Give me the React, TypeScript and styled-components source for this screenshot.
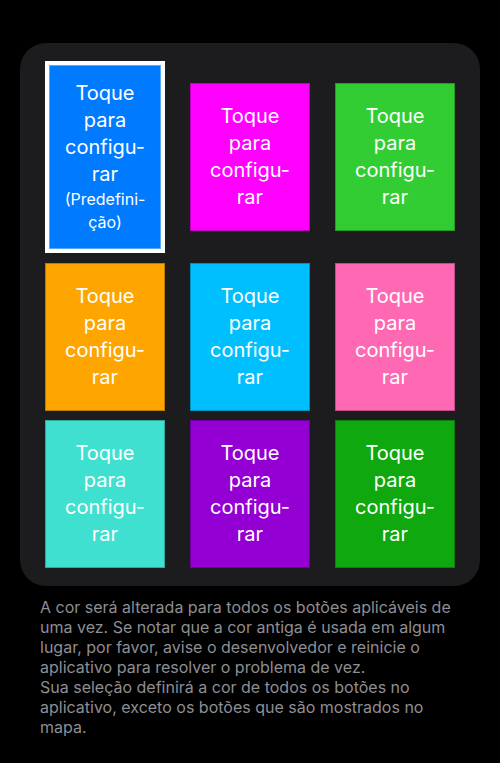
import React from "react";
import styled, { createGlobalStyle } from "styled-components";

const Global = createGlobalStyle`
  html, body { margin: 0; padding: 0; background: #000; }
  body { font-family: Inter, "Noto Sans", "Liberation Sans", sans-serif; -webkit-font-smoothing: antialiased; }
`;

const Page = styled.div`
  min-height: 763px;
  background: #000;
  padding: 43px 20px 0;
  box-sizing: border-box;
`;

const Card = styled.div`
  background: #1c1c1e;
  border-radius: 26px;
  padding: 18px 25px 19px;
  display: grid;
  grid-template-columns: repeat(3, 120px);
  grid-template-rows: 192px 147px 147px;
  column-gap: 25px;
  row-gap: 10px;
`;

const Tile = styled.div<{ $bg: string; $selected?: boolean }>`
  background: ${(p) => p.$bg};
  height: ${(p) => (p.$selected ? "192px" : "148px")};
  align-self: center;
  box-sizing: border-box;
  border: ${(p) => (p.$selected ? "4px solid #fff" : "1px solid rgba(0,0,0,0.25)")};
  box-shadow: ${(p) => (p.$selected ? "inset 0 0 0 1px rgba(255,255,255,0.35)" : "none")};
  display: flex;
  flex-direction: column;
  align-items: center;
  justify-content: center;
  color: #fff;
  text-align: center;
  cursor: pointer;
`;

const Label = styled.div`
  font-size: 20px;
  line-height: 27px;
`;

const Sub = styled.div`
  font-size: 16px;
  line-height: 23px;
`;

const Footer = styled.p`
  margin: 11px 0 0;
  padding: 0 20px;
  color: #8e8e93;
  font-size: 16px;
  line-height: 20px;
`;

const tiles = [
  { bg: "#007aff", selected: true },
  { bg: "#ff00ff" },
  { bg: "#32cd32" },
  { bg: "#ffa500" },
  { bg: "#00bfff" },
  { bg: "#ff69b4" },
  { bg: "#40e0d0" },
  { bg: "#9400d3" },
  { bg: "#0fa80f" },
];

export default function App() {
  return (
    <>
      <Global />
      <Page>
        <Card>
          {tiles.map((t, i) => (
            <Tile key={i} $bg={t.bg} $selected={t.selected}>
              <Label>
                Toque
                <br />
                para
                <br />
                configu-
                <br />
                rar
              </Label>
              {t.selected && (
                <Sub>
                  (Predefini-
                  <br />
                  ção)
                </Sub>
              )}
            </Tile>
          ))}
        </Card>
        <Footer>
          A cor será alterada para todos os botões aplicáveis de uma vez. Se notar que a cor antiga é usada em algum lugar, por favor, avise o desenvolvedor e reinicie o aplicativo para resolver o problema de vez.
          <br />
          Sua seleção definirá a cor de todos os botões no aplicativo, exceto os botões que são mostrados no mapa.
        </Footer>
      </Page>
    </>
  );
}
